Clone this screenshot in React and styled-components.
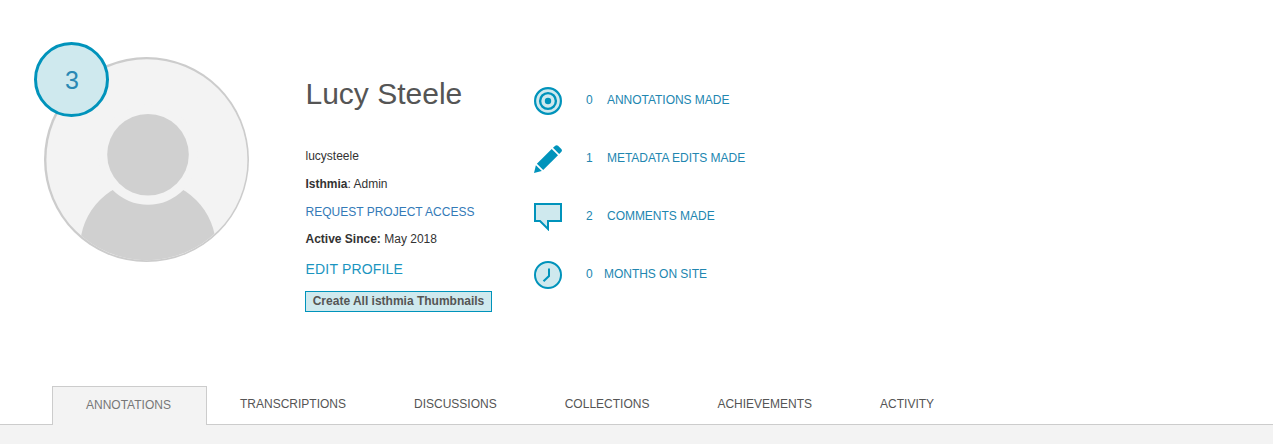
import React from "react";
import styled, { createGlobalStyle } from "styled-components";

const teal = "#0093bb";
const pale = "#cfe9ee";

const GlobalStyle = createGlobalStyle`
  *, *::before, *::after { box-sizing: border-box; }
  body {
    margin: 0;
    background: #fff;
    color: #333;
    font: 12px/20px "Liberation Sans", Arial, sans-serif;
  }
`;

const Page = styled.div`
  display: flex;
  flex-direction: column;
  height: 444px;
  overflow: hidden;
`;

const Profile = styled.section`
  display: flex;
  align-items: flex-start;
  height: 386px;
  padding: 57px 0 0 44px;
`;

const Avatar = styled.div`
  position: relative;
  width: 205px;
  height: 205px;
  flex: none;

  svg { display: block; }
`;

const Badge = styled.span`
  position: absolute;
  top: -15px;
  left: -10px;
  display: flex;
  align-items: center;
  justify-content: center;
  width: 75px;
  height: 75px;
  padding-left: 1px;
  border: 3px solid ${teal};
  border-radius: 50%;
  background: ${pale};
  color: #2a88b4;
  font-size: 25px;
`;

const Details = styled.div`
  display: flex;
  flex-direction: column;
  align-items: flex-start;
  width: 229px;
  margin-left: 56px;
  padding: 17px 0 0 0.5px;
  white-space: nowrap;
`;

const Name = styled.h1`
  margin: 0 0 33px;
  color: #555;
  font-size: 30px;
  font-weight: 400;
  line-height: 39px;
`;

const Line = styled.p`
  margin: 0;
  line-height: ${(p) => p.$height || 28}px;
`;

const Link = styled.a`
  color: ${(p) => (p.$large ? "#1b95bf" : "#337ab7")};
  font-size: ${(p) => (p.$large ? 14 : 12)}px;
  letter-spacing: ${(p) => (p.$large ? 0.18 : 0)}px;
  text-decoration: none;
  text-transform: uppercase;
`;

const Button = styled.button`
  width: 187px;
  height: 21px;
  margin: 8px 0 0 -0.5px;
  padding: 0 0 1px;
  border: 1px solid ${teal};
  background: ${pale};
  color: #555;
  font: bold 12px/18px "Liberation Sans", Arial, sans-serif;
`;

const Stats = styled.ul`
  display: flex;
  flex-direction: column;
  gap: 30px;
  margin: 0;
  padding: 30px 0 0;
  list-style: none;
`;

const Stat = styled.li`
  display: flex;
  height: 28px;
  color: #2186b0;
  letter-spacing: -0.03px;
  line-height: 26px;
  white-space: nowrap;

  svg { display: block; flex: none; }
`;

const Count = styled.span`
  width: ${(p) => (p.$tight ? 18 : 21)}px;
  margin-left: 24px;
`;

const Tabs = styled.nav`
  display: flex;
  height: 39px;
  flex: none;
  padding-left: 52px;
  box-shadow: inset 0 -1px #ccc;
`;

const Tab = styled.a`
  padding: 0 34px;
  color: #555;
  line-height: 36px;
  text-transform: uppercase;

  ${(p) => p.$active && `
    padding-left: 33px;
    margin-right: -1px;
    border: 1px solid #ccc;
    border-bottom: 0;
    background: #f3f3f3;
    color: #777;
    min-width: 155px;
  `}
`;

const Panel = styled.main`
  flex: 1;
  background: #f3f3f3;
`;

const Silhouette = () => (
  <svg width="205" height="205" viewBox="0 0 205 205">
    <defs>
      <clipPath id="portrait"><circle cx="102.8" cy="102.8" r="100.4" /></clipPath>
    </defs>
    <circle cx="102.5" cy="102.5" r="102.5" fill="#ccc" />
    <circle cx="102.9" cy="102.8" r="100.5" fill="#f3f3f3" />
    <g clipPath="url(#portrait)">
      <circle cx="104" cy="191" r="68" fill="#d0d0d0" />
      <circle cx="104" cy="97.7" r="50" fill="#f3f3f3" />
      <circle cx="104" cy="97.7" r="40.8" fill="#d0d0d0" />
    </g>
  </svg>
);

const icons = {
  target: (
    <>
      <circle cx="14" cy="14" r="12.9" fill={pale} stroke={teal} strokeWidth="2.2" />
      <circle cx="14" cy="14" r="7.9" fill="none" stroke={teal} strokeWidth="2.4" />
      <circle cx="14" cy="14" r="3.2" fill={teal} />
    </>
  ),
  pencil: (
    <g fill={teal}>
      <path d="M19 2.8 21.2.7Q22.7-.4 24.1.7L27.3 3.9Q28.5 5.3 27.4 6.7L25.2 9Z" />
      <path d="M17.7 3.9 24 10.2 9.2 25 2.9 18.7Z" />
      <path d="M1.9 20.2 7.8 26.1 0 28Z" />
    </g>
  ),
  comment: (
    <path d="M1 1H27V18.1H14V26L6 18.1H1Z" fill={pale} stroke={teal} strokeWidth="2" />
  ),
  clock: (
    <>
      <circle cx="14" cy="14" r="13" fill={pale} stroke={teal} strokeWidth="2" />
      <path d="M15 7.5V15L9.5 20.3" fill="none" stroke={teal} strokeWidth="2" />
    </>
  ),
};

const Icon = ({ name }) => (
  <svg width="28" height="28" viewBox="0 0 28 28">{icons[name]}</svg>
);

const stats = [
  { icon: "target", count: 0, label: "ANNOTATIONS MADE" },
  { icon: "pencil", count: 1, label: "METADATA EDITS MADE" },
  { icon: "comment", count: 2, label: "COMMENTS MADE" },
  { icon: "clock", count: 0, label: "MONTHS ON SITE", tight: true },
];

const tabs = ["Annotations", "Transcriptions", "Discussions", "Collections", "Achievements", "Activity"];

export default function App() {
  return (
    <Page>
      <GlobalStyle />
      <Profile>
        <Avatar>
          <Silhouette />
          <Badge>3</Badge>
        </Avatar>
        <Details>
          <Name>Lucy Steele</Name>
          <Line $height={20}>lucysteele</Line>
          <Line $height={36}><b>Isthmia</b>: Admin</Line>
          <Line $height={20}><Link>Request Project Access</Link></Line>
          <Line $height={34}><b>Active Since:</b> May 2018</Line>
          <Line $height={26}><Link $large>Edit Profile</Link></Line>
          <Button>Create All isthmia Thumbnails</Button>
        </Details>
        <Stats>
          {stats.map((s) => (
            <Stat key={s.label}>
              <Icon name={s.icon} />
              <Count $tight={s.tight}>{s.count}</Count>
              <span>{s.label}</span>
            </Stat>
          ))}
        </Stats>
      </Profile>
      <Tabs>
        {tabs.map((t, i) => (
          <Tab key={t} $active={i === 0}>{t}</Tab>
        ))}
      </Tabs>
      <Panel />
    </Page>
  );
}
